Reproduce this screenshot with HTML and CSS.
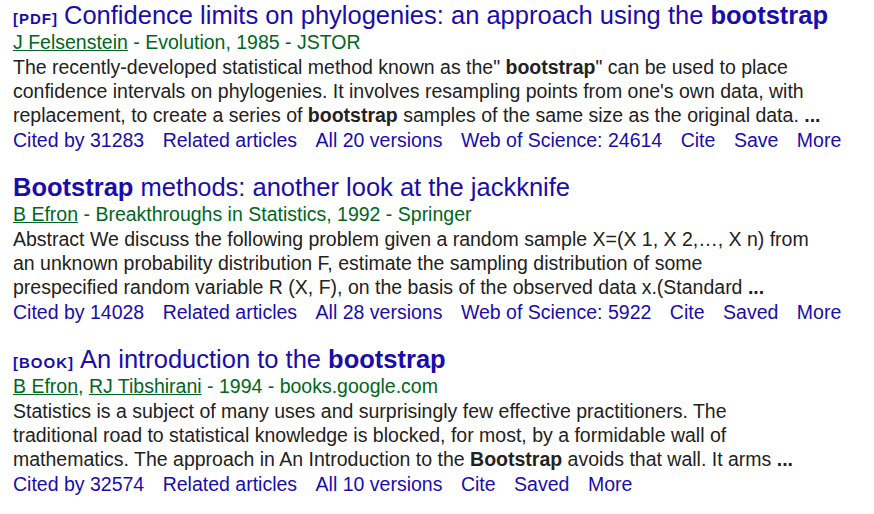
FILE: index.html
```html
<!DOCTYPE html>
<html>
<head>
<meta charset="utf-8">
<link rel="stylesheet" href="styles.css">
</head>
<body>
<div class="results">
  <div class="result">
    <h3 class="title"><span class="tag">[PDF]</span><a href="#">Confidence limits on phylogenies: an approach using the <b>bootstrap</b></a></h3>
    <div class="authors"><a href="#">J Felsenstein</a> - Evolution, 1985 - JSTOR</div>
    <div class="snippet">The recently-developed statistical method known as the" <b>bootstrap</b>" can be used to place<br>confidence intervals on phylogenies. It involves resampling points from one's own data, with<br>replacement, to create a series of <b>bootstrap</b> samples of the same size as the original data. <b>...</b></div>
    <div class="links"><a href="#">Cited by 31283</a><a href="#">Related articles</a><a href="#">All 20 versions</a><a href="#">Web of Science: 24614</a><a href="#">Cite</a><a href="#">Save</a><a href="#">More</a></div>
  </div>
  <div class="result">
    <h3 class="title"><a href="#"><b>Bootstrap</b> methods: another look at the jackknife</a></h3>
    <div class="authors"><a href="#">B Efron</a> - Breakthroughs in Statistics, 1992 - Springer</div>
    <div class="snippet">Abstract We discuss the following problem given a random sample X=(X 1, X 2,…, X n) from<br>an unknown probability distribution F, estimate the sampling distribution of some<br>prespecified random variable R (X, F), on the basis of the observed data x.(Standard <b>...</b></div>
    <div class="links"><a href="#">Cited by 14028</a><a href="#">Related articles</a><a href="#">All 28 versions</a><a href="#">Web of Science: 5922</a><a href="#">Cite</a><a href="#">Saved</a><a href="#">More</a></div>
  </div>
  <div class="result">
    <h3 class="title"><span class="tag">[BOOK]</span><a href="#">An introduction to the <b>bootstrap</b></a></h3>
    <div class="authors"><a href="#">B Efron</a>, <a href="#">RJ Tibshirani</a> - 1994 - books.google.com</div>
    <div class="snippet">Statistics is a subject of many uses and surprisingly few effective practitioners. The<br>traditional road to statistical knowledge is blocked, for most, by a formidable wall of<br>mathematics. The approach in An Introduction to the <b>Bootstrap</b> avoids that wall. It arms <b>...</b></div>
    <div class="links"><a href="#">Cited by 32574</a><a href="#">Related articles</a><a href="#">All 10 versions</a><a href="#">Cite</a><a href="#">Saved</a><a href="#">More</a></div>
  </div>
</div>
</body>
</html>
```
FILE: styles.css
```css
html, body {
  margin: 0;
  padding: 0;
  background: #fff;
}
body {
  font-family: "Liberation Sans", Arial, sans-serif;
  color: #222;
}
.results {
  padding: 0 0 0 13px;
}
.result {
  margin-bottom: 20px;
}
.title {
  margin: 0;
  font-size: 25.5px;
  font-weight: normal;
  line-height: 30px;
}
.title a {
  color: #1a0dab;
  text-decoration: none;
}
.tag {
  font-size: 15px;
  line-height: 1;
  letter-spacing: 1px;
  font-weight: bold;
  color: #1a0dab;
  margin-right: 6px;
}
.authors {
  font-size: 19.5px;
  line-height: 24px;
  color: #006621;
}
.authors a {
  color: #006621;
  text-decoration: underline;
}
.snippet {
  margin-top: 1px;
  font-size: 19.5px;
  line-height: 24px;
  color: #222;
}
.links {
  margin-top: 1px;
  font-size: 19.5px;
  line-height: 24px;
  display: flex;
  gap: 18.5px;
}
.links a {
  color: #1a0dab;
  text-decoration: none;
}
```
